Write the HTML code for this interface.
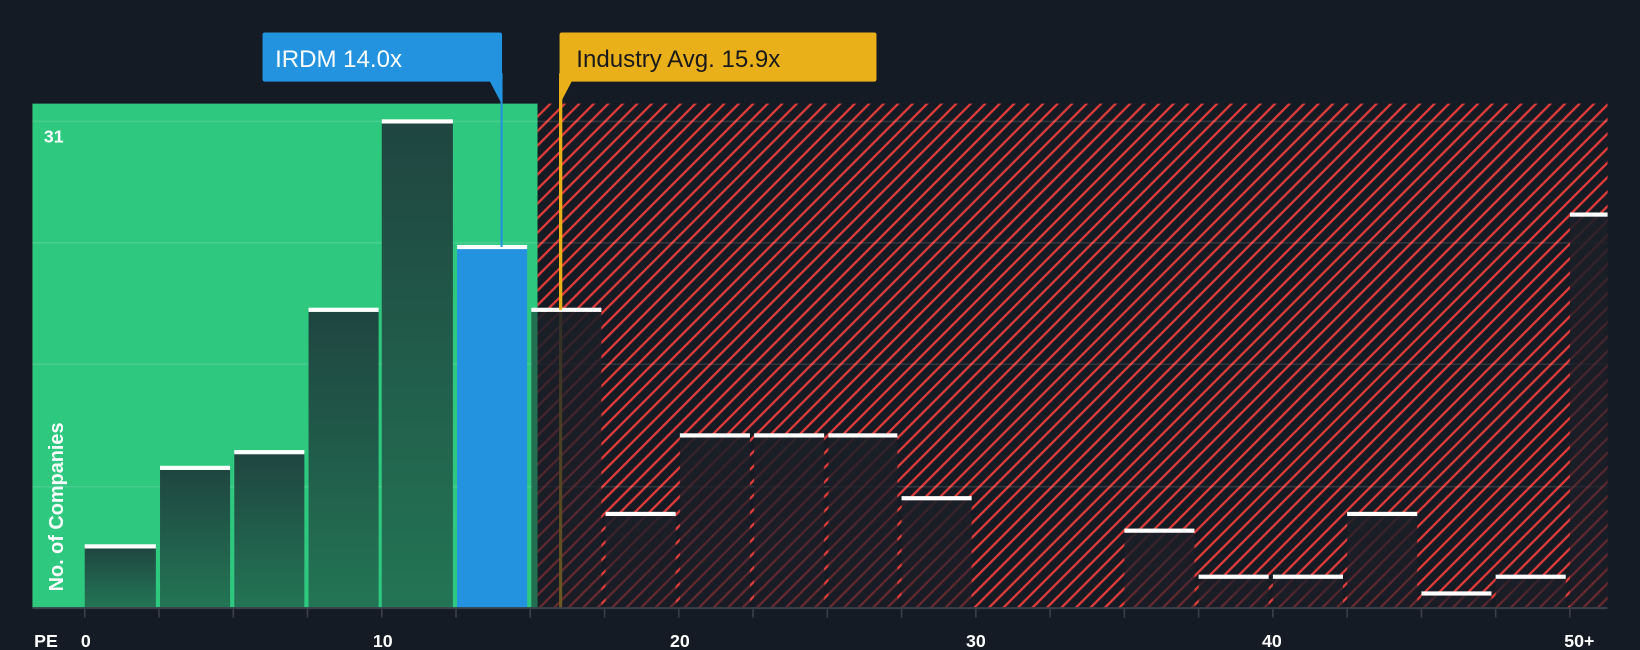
<!DOCTYPE html>
<html><head><meta charset="utf-8"><style>
html,body{margin:0;padding:0;background:#151b24;}
svg{display:block;}
text{font-family:"Liberation Sans",sans-serif;}
</style></head><body>
<svg width="1640" height="650" viewBox="0 0 1568 621" preserveAspectRatio="none" xmlns="http://www.w3.org/2000/svg">
<defs>
<pattern id="h" patternUnits="userSpaceOnUse" width="9.8" height="9.8" patternTransform="rotate(45)">
<rect width="9.8" height="9.8" fill="#161a22"/>
<rect x="0" y="0" width="2.2" height="9.8" fill="#e03c3c"/>
</pattern>
<linearGradient id="g" x1="0" y1="0" x2="0" y2="1"><stop offset="0" stop-color="#1f4540"/><stop offset="1" stop-color="#237555"/></linearGradient>
<linearGradient id="d" x1="0" y1="0" x2="0" y2="1"><stop offset="0" stop-color="#1b1e27" stop-opacity="0.9"/><stop offset="1" stop-color="#1b1e27" stop-opacity="0.6"/></linearGradient>
</defs>
<rect width="1568" height="621" fill="#151b24"/>
<rect x="31" y="99" width="483" height="482" fill="#2ec87f"/>
<rect x="514" y="99" width="1023" height="482" fill="url(#h)"/>
<g stroke="#ffffff" stroke-opacity="0.12" stroke-width="1.5">
<line x1="31" y1="116" x2="1537" y2="116"/><line x1="31" y1="232" x2="1537" y2="232"/><line x1="31" y1="348" x2="1537" y2="348"/><line x1="31" y1="465" x2="1537" y2="465"/>
</g>
<g fill="url(#g)">
<rect x="81" y="522" width="68" height="59"/><rect x="153" y="447" width="67" height="134"/><rect x="224" y="432" width="67" height="149"/><rect x="295" y="296" width="67" height="285"/><rect x="365" y="116" width="68" height="465"/>
</g>
<rect x="437" y="236" width="67" height="345" fill="#2393e0"/>
<rect x="508" y="296" width="6" height="285" fill="#236e50"/>
<line x1="536" y1="70" x2="536" y2="581" stroke="#e9b01a" stroke-width="3"/>
<g fill="url(#d)">
<rect x="514" y="296" width="61" height="285"/><rect x="579" y="491" width="67" height="90"/><rect x="650" y="416" width="67" height="165"/><rect x="721" y="416" width="67" height="165"/><rect x="792" y="416" width="66" height="165"/><rect x="862" y="476" width="67" height="105"/><rect x="1075" y="507" width="67" height="74"/><rect x="1146" y="551" width="67" height="30"/><rect x="1217" y="551" width="67" height="30"/><rect x="1288" y="491" width="67" height="90"/><rect x="1359" y="567" width="67" height="14"/><rect x="1430" y="551" width="67" height="30"/><rect x="1501" y="205" width="36" height="376"/>
</g>
<g fill="#ffffff">
<rect x="81" y="520" width="68" height="4"/><rect x="153" y="445" width="67" height="4"/><rect x="224" y="430" width="67" height="4"/><rect x="295" y="294" width="67" height="4"/><rect x="365" y="114" width="68" height="4"/><rect x="437" y="234" width="67" height="4"/><rect x="508" y="294" width="67" height="4"/><rect x="579" y="489" width="67" height="4"/><rect x="650" y="414" width="67" height="4"/><rect x="721" y="414" width="67" height="4"/><rect x="792" y="414" width="66" height="4"/><rect x="862" y="474" width="67" height="4"/><rect x="1075" y="505" width="67" height="4"/><rect x="1146" y="549" width="67" height="4"/><rect x="1217" y="549" width="67" height="4"/><rect x="1288" y="489" width="67" height="4"/><rect x="1359" y="565" width="67" height="4"/><rect x="1430" y="549" width="67" height="4"/><rect x="1501" y="203" width="36" height="4"/>
</g>
<line x1="31" y1="581" x2="1537" y2="581" stroke="#3a404a" stroke-width="2"/>
<g stroke="#3a404a" stroke-width="1.5">
<line x1="81" y1="581" x2="81" y2="590"/><line x1="152" y1="581" x2="152" y2="590"/><line x1="223" y1="581" x2="223" y2="590"/><line x1="294" y1="581" x2="294" y2="590"/><line x1="365" y1="581" x2="365" y2="590"/><line x1="436" y1="581" x2="436" y2="590"/><line x1="507" y1="581" x2="507" y2="590"/><line x1="578" y1="581" x2="578" y2="590"/><line x1="649" y1="581" x2="649" y2="590"/><line x1="720" y1="581" x2="720" y2="590"/><line x1="791" y1="581" x2="791" y2="590"/><line x1="862" y1="581" x2="862" y2="590"/><line x1="933" y1="581" x2="933" y2="590"/><line x1="1004" y1="581" x2="1004" y2="590"/><line x1="1075" y1="581" x2="1075" y2="590"/><line x1="1146" y1="581" x2="1146" y2="590"/><line x1="1217" y1="581" x2="1217" y2="590"/><line x1="1288" y1="581" x2="1288" y2="590"/><line x1="1359" y1="581" x2="1359" y2="590"/><line x1="1430" y1="581" x2="1430" y2="590"/><line x1="1501" y1="581" x2="1501" y2="590"/>
</g>
<line x1="479.5" y1="70" x2="479.5" y2="236" stroke="#2393e0" stroke-width="2"/>
<rect x="251" y="31" width="229" height="47" rx="2" fill="#2393e0"/>
<polygon points="468,77 480,77 480,100" fill="#2393e0"/>
<text x="263" y="64" font-size="23" fill="#ffffff">IRDM 14.0x</text>
<line x1="536" y1="78" x2="536" y2="296" stroke="#e9b01a" stroke-width="3"/>
<rect x="535" y="31" width="303" height="47" rx="2" fill="#e9b01a"/>
<polygon points="535,77 547,77 535,100" fill="#e9b01a"/>
<text x="551" y="64" font-size="23" fill="#1a1a1a">Industry Avg. 15.9x</text>
<text x="42" y="136" font-size="17" font-weight="bold" fill="#ffffff">31</text>
<text transform="translate(60,565) rotate(-90)" font-size="19" fill="#ffffff" font-weight="600">No. of Companies</text>
<g font-size="17" font-weight="bold" fill="#ffffff" text-anchor="middle">
<text x="44" y="618">PE</text><text x="82" y="618">0</text><text x="366" y="618">10</text><text x="650" y="618">20</text><text x="933" y="618">30</text><text x="1216" y="618">40</text><text x="1510" y="618">50+</text>
</g>
</svg>
</body></html>
